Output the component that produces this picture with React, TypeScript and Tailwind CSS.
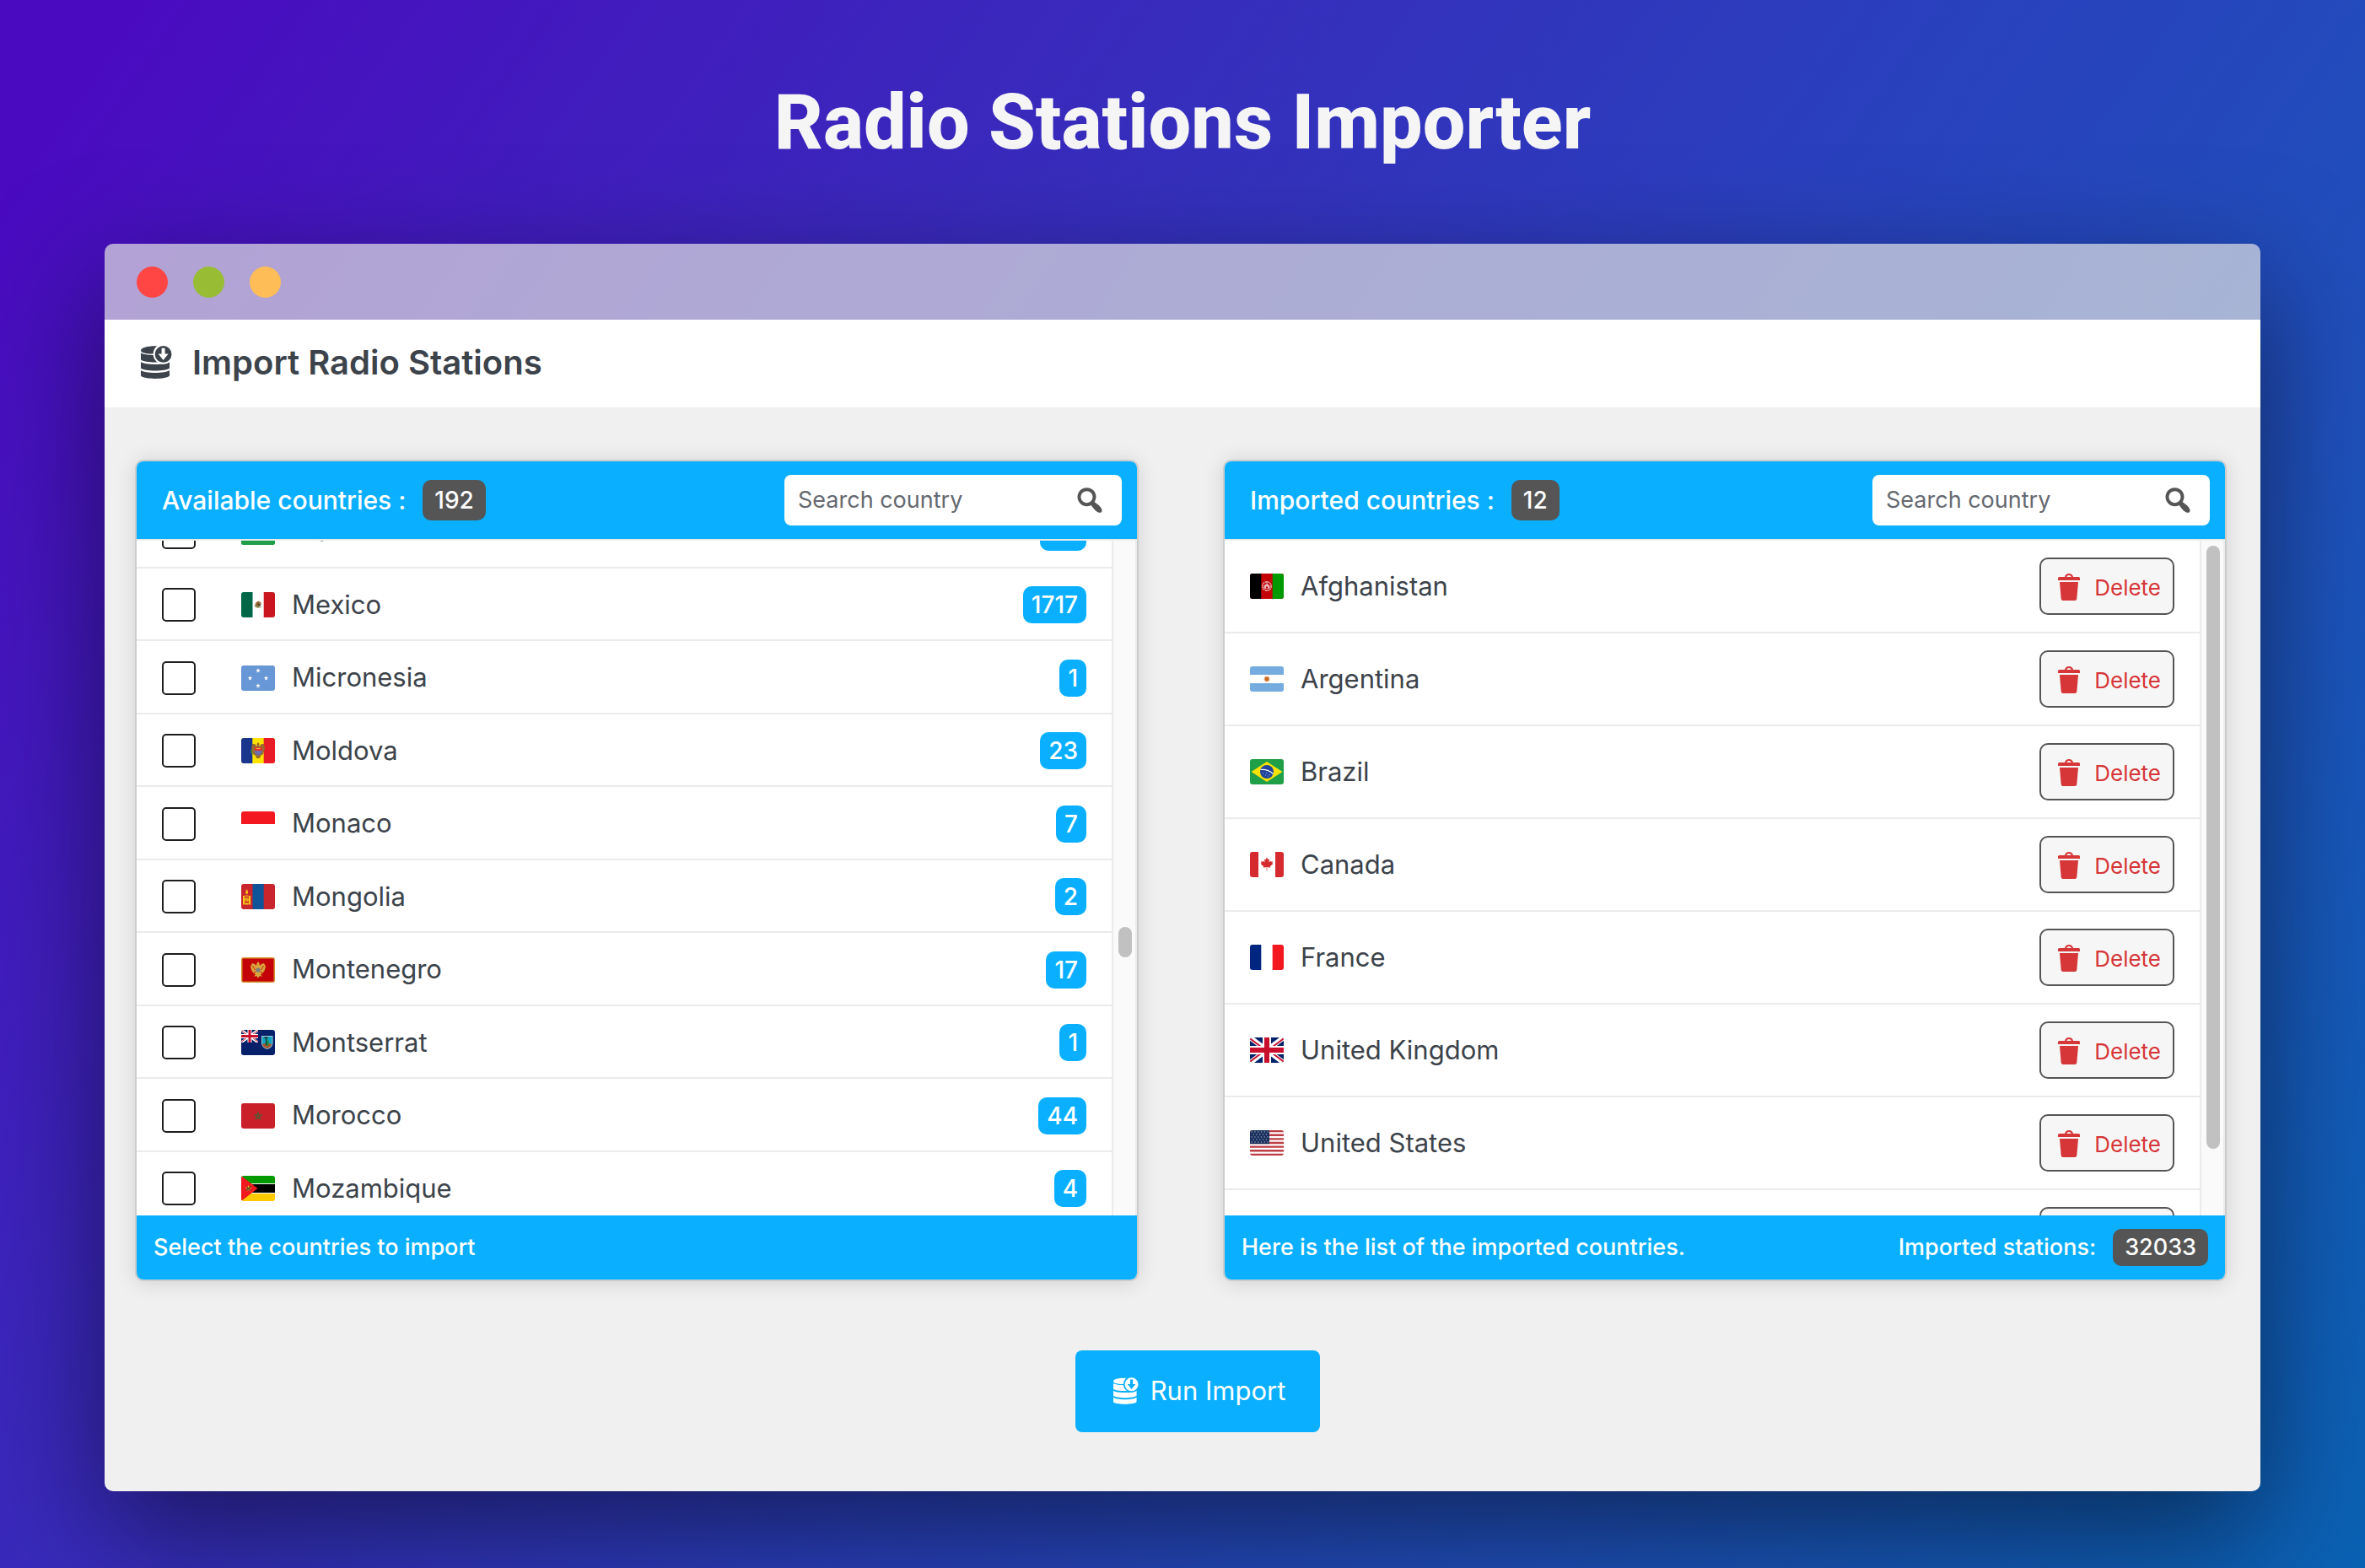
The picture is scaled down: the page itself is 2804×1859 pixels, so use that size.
import { useState, type ReactNode } from "react";

/* ---------- icons ---------- */

function DatabaseImportIcon({ className }: { className: string }) {
  return (
    <svg viewBox="0 0 37 40" className={className} fill="currentColor" aria-hidden="true">
      <mask id="db-cut" maskUnits="userSpaceOnUse" x="0" y="0" width="37" height="40">
        <rect width="37" height="40" fill="#fff" />
        <circle cx="26.6" cy="9.8" r="12" fill="#000" />
      </mask>
      <g mask="url(#db-cut)">
        <path d="M0 5.4C0 2.4 7.600 0.300 17 0.300S34 2.400 34 5.400 26.400 9.600 17 9.600 0 8.400 0 5.400Z" />
        <path d="M0 8.300C4 12 30 12 34 8.300V16.500C30 20.500 4 20.500 0 16.500Z" />
        <path d="M0 19C4 23 30 23 34 19V26.500C30 30.500 4 30.500 0 26.500Z" />
        <path d="M0 29C4 33 30 33 34 29V35.500C31 40 3 40 0 35.500Z" />
      </g>
      <path
        fillRule="evenodd"
        d="M26.600 0a9.900 9.900 0 1 1 0 19.800a9.900 9.900 0 1 1 0-19.800ZM24.600 2.800V9.500H20.600L26.600 17L32.600 9.500H28.600V2.800Z"
      />
    </svg>
  );
}

function SearchIcon() {
  return (
    <svg viewBox="0 0 20 20" className="size-10 shrink-0 text-[#555]" fill="currentColor" aria-hidden="true">
      <path d="M12.140 4.180c1.870 1.870 2.110 4.750.720 6.890.120.100.220.210.360.310.200.160.470.360.810.590.340.240.560.390.660.470.420.310.730.570.940.780.320.320.600.650.840 1 .250.350.440.690.590 1.040.140.350.210.680.180 1-.020.320-.140.590-.360.810s-.490.340-.810.360c-.310.020-.650-.040-.990-.190-.350-.140-.700-.340-1.040-.590-.350-.240-.680-.520-1-.840-.210-.210-.470-.520-.770-.930-.100-.130-.250-.350-.470-.660-.220-.320-.400-.570-.560-.780-.160-.200-.290-.350-.440-.500-2.070 1.090-4.690.760-6.440-.980-2.140-2.150-2.140-5.640 0-7.780 2.150-2.150 5.630-2.150 7.780 0zM10.730 10.540c1.360-1.370 1.360-3.580 0-4.950-1.370-1.370-3.590-1.370-4.950 0-1.370 1.370-1.370 3.580 0 4.950 1.360 1.370 3.580 1.370 4.950 0z" />
    </svg>
  );
}

function TrashIcon() {
  return (
    <svg viewBox="0 0 26 32" className="h-8 w-[26px] shrink-0" fill="currentColor" aria-hidden="true">
      <path
        fillRule="evenodd"
        d="M8 4C8.500 1.500 10.500 0 13 0S17.500 1.500 18 4H24.500Q26 4 26 5.500V8H0V5.500Q0 4 1.500 4ZM10.200 4H15.800Q15 1.900 13 1.900T10.200 4Z"
      />
      <path d="M2 10H24L22.300 30Q22.100 32 20 32H6Q3.900 32 3.700 30Z" />
    </svg>
  );
}

/* ---------- flags ---------- */

function starPoints(cx: number, cy: number, r: number, tips = 5, inner = 0.4) {
  return Array.from({ length: tips * 2 }, (_, i) => {
    const radius = i % 2 === 0 ? r : r * inner;
    const angle = (Math.PI * i) / tips - Math.PI / 2;
    return `${(cx + radius * Math.cos(angle)).toFixed(2)},${(cy + radius * Math.sin(angle)).toFixed(2)}`;
  }).join(" ");
}

const unionJack = (
  <>
    <rect width="40" height="30" fill="#012169" />
    <path d="M0 0L40 30M40 0L0 30" stroke="#fff" strokeWidth="6" />
    <path d="M0 1.200L16 13.200M24 16.800L40 28.800M40 1.200L24 13.200M16 16.800L0 28.800" stroke="#c8102e" strokeWidth="2" />
    <path d="M20 0V30M0 15H40" stroke="#fff" strokeWidth="10" />
    <path d="M20 0V30M0 15H40" stroke="#c8102e" strokeWidth="6" />
  </>
);

const flagArt: Record<string, ReactNode> = {
  mu: (
    <>
      <rect width="40" height="30" fill="#009f4d" />
      <rect width="40" height="22" fill="#ffd900" />
      <rect width="40" height="15" fill="#151f6d" />
      <rect width="40" height="7" fill="#ee2737" />
      <rect y="22" width="40" height="8" fill="#1f9f48" />
    </>
  ),
  mx: (
    <>
      <rect width="40" height="30" fill="#fff" />
      <rect width="13.500" height="30" fill="#006847" />
      <rect x="26.700" width="13.300" height="30" fill="#c9161f" />
      <path d="M16.500 14.500Q18 10.500 21 10.800Q24 12 23.500 15L21 18Q18 18.500 16.500 17Z" fill="#9a6a3a" />
      <path d="M15.500 16Q18 19.500 24 17.500" fill="none" stroke="#8fa06a" />
      <path d="M19.500 14l3 2" stroke="#2d3a3c" strokeWidth="1.500" />
    </>
  ),
  fm: (
    <>
      <rect width="40" height="30" fill="#6797d6" />
      <polygon points={starPoints(20, 6, 3)} fill="#fff" />
      <polygon points={starPoints(20, 24, 3)} fill="#fff" />
      <polygon points={starPoints(10.5, 15, 3)} fill="#fff" />
      <polygon points={starPoints(29.5, 15, 3)} fill="#fff" />
    </>
  ),
  md: (
    <>
      <rect width="40" height="30" fill="#fee300" />
      <rect width="13.300" height="30" fill="#19358e" />
      <rect x="26.700" width="13.300" height="30" fill="#e91b26" />
      <path d="M20 5l1.500 2 -.5 3 3-3h3l1 6-2 6-3 2-1 3h-4l-1-3-3-2-2-6 1-6h3l3 3-.5-3Z" fill="#9c6b2e" />
      <rect x="16" y="11" width="8.500" height="4" fill="#e3312d" />
      <path d="M16 15h8.500v3L20 21l-4-3Z" fill="#6b6fae" />
      <path d="M18 12.500h4.500" stroke="#f3c53a" />
      <path d="M11.500 14l1.500 5" stroke="#3f8d3a" strokeWidth="1.500" />
    </>
  ),
  mc: (
    <>
      <rect width="40" height="30" fill="#fff" />
      <rect width="40" height="15" fill="#f31820" />
    </>
  ),
  mn: (
    <>
      <rect width="40" height="30" fill="#c9252d" />
      <rect x="13.500" width="13.200" height="30" fill="#0f5499" />
      <path d="M2 14h2.200v10.500H2ZM8.800 14H11v10.500H8.800ZM4.600 13.500h3.800v1.200H4.600ZM4.600 22.500h3.800v2H4.600Z" fill="#f5c816" />
      <circle cx="6.500" cy="18.500" r="2.300" fill="#f5c816" />
      <path d="M6.500 17q1.200.8 0 1.600t0 1.600" stroke="#c9252d" strokeWidth=".7" fill="none" />
      <path d="M6.500 6q2.200 3 1.400 5a1.500 1.500 0 0 1-2.800 0q.2-2 1.400-5Z" fill="#f5c816" />
    </>
  ),
  me: (
    <>
      <rect width="40" height="30" fill="#d8922c" />
      <rect x="1.500" y="1.500" width="37" height="27" fill="#c40308" />
      <path
        d="M20 5l1.500 2 .5 3L24 8l3-1 2 4-1.500 5L25 19l-2 1 2 3-3-1-2 2.500L18 22l-3 1 2-3-2-1-2.500-3L11 11l2-4 3 1 2 2 .5-3Z"
        fill="#d9a63e"
      />
      <circle cx="20" cy="15" r="2.600" fill="#7a7f80" />
      <path d="M13.500 10l3 5M26.500 10l-3 5M15 18l2.500-1M25 18l-2.500-1" stroke="#c40308" strokeWidth=".8" />
    </>
  ),
  ms: (
    <>
      <rect width="40" height="30" fill="#062169" />
      <svg width="20" height="15" viewBox="0 0 40 30">
        {unionJack}
      </svg>
      <path d="M24 7h13.500v9q-1 5.500-6.700 7Q25 21.500 24 16Z" fill="#a9c3cf" />
      <path d="M25 8h11.500v8q-1 4.500-5.700 6Q26 20.500 25 16Z" fill="#0fa3c4" />
      <path d="M25 17q5-2 11.300 0-1.500 4-5.500 5-4.800-1-5.800-5Z" fill="#a8552c" />
      <path d="M31 10l2 5-1 4h-2.500l1-5Z" fill="#1f8a3c" />
      <path d="M29.500 8v10M27 9.500h5" stroke="#1b2b2a" strokeWidth="1.200" />
    </>
  ),
  ma: (
    <>
      <rect width="40" height="30" fill="#c9202a" />
      <polygon points={starPoints(20, 15.3, 4)} fill="none" stroke="#4e5b32" strokeWidth="1.300" />
    </>
  ),
  mz: (
    <>
      <rect width="40" height="30" fill="#fff" />
      <rect width="40" height="9" fill="#009a00" />
      <rect y="10" width="40" height="10" fill="#000" />
      <rect y="21" width="40" height="9" fill="#ffca00" />
      <path d="M0 0L19.500 15L0 30Z" fill="#f31820" />
      <polygon points={starPoints(8.5, 15, 4.2)} fill="#ffca00" />
      <path d="M6 17.500l5.500-5M6.500 13.500l4.500 4" stroke="#3a3a3a" strokeWidth="1.100" />
    </>
  ),
  af: (
    <>
      <rect width="40" height="30" fill="#c40308" />
      <rect width="13.300" height="30" fill="#000" />
      <rect x="26.700" width="13.300" height="30" fill="#009a00" />
      <circle cx="20" cy="15" r="5.200" fill="none" stroke="#e8b7b7" strokeWidth="1.400" strokeDasharray="2 .7" />
      <path d="M17 17.500v-3q3-4 6 0v3ZM18 19.500h4M20 9v3" fill="#e8b7b7" stroke="#e8b7b7" strokeWidth=".8" />
      <path d="M19 17.500v-2h2v2" fill="#c40308" />
    </>
  ),
  ar: (
    <>
      <rect width="40" height="30" fill="#74acdf" />
      <rect y="10" width="40" height="10" fill="#fff" />
      <polygon points={starPoints(20, 15, 4.2, 12, 0.65)} fill="#e6a57c" />
      <circle cx="20" cy="15" r="2.300" fill="#c8691c" />
    </>
  ),
  br: (
    <>
      <rect width="40" height="30" fill="#1f9f48" />
      <path d="M20 3L38.500 15L20 27L1.500 15Z" fill="#f8e105" />
      <circle cx="20" cy="15" r="8" fill="#20449b" />
      <path d="M12.500 12.500Q21 11.500 27.500 17.500" stroke="#fff" strokeWidth="1.200" fill="none" />
      <path d="M15 17h1M18 19h1M21 20h1M23 18.500h1M19 16.500h1" stroke="#b8c5e6" strokeWidth=".9" />
    </>
  ),
  ca: (
    <>
      <rect width="40" height="30" fill="#fff" />
      <path d="M0 0H10V30H0ZM30 0H40V30H30Z" fill="#d52b2e" />
      <path
        d="M20 6.500l1.500 2.800 1.600-.8-.7 4 2-2 .5 1.200 2.200-.4-.7 2.200 1 .6-3.600 3.200.4 1.400-3.900-.6V22.500h-.6V18.100l-3.900.6.4-1.400-3.600-3.200 1-.6-.7-2.200 2.200.4.500-1.200 2 2-.7-4 1.600.8Z"
        fill="#d52b2e"
      />
    </>
  ),
  fr: (
    <>
      <rect width="40" height="30" fill="#fff" />
      <rect width="13.300" height="30" fill="#00267f" />
      <rect x="26.700" width="13.300" height="30" fill="#f31820" />
    </>
  ),
  gb: unionJack,
  us: (
    <>
      <rect width="40" height="30" fill="#fff" />
      <path
        d="M0 1.150H40M0 5.770H40M0 10.380H40M0 15H40M0 19.620H40M0 24.230H40M0 28.850H40"
        stroke="#bd3d44"
        strokeWidth="2.310"
      />
      <rect width="23" height="16.150" fill="#192f5d" />
      {[2, 5, 8, 11, 14].map((y, row) => (
        <path
          key={y}
          d={row % 2 === 0 ? `M1.500 ${y}H22` : `M3.500 ${y}H22`}
          stroke="#c5ccda"
          strokeWidth="1.200"
          strokeDasharray="1.200 2.600"
        />
      ))}
    </>
  ),
};

function Flag({ code }: { code: string }) {
  return (
    <svg viewBox="0 0 40 30" className="h-[30px] w-10 shrink-0 rounded-[3px]" aria-hidden="true">
      {flagArt[code]}
    </svg>
  );
}

/* ---------- data ---------- */

const available = [
  { code: "mu", name: "Mauritius", stations: 22 },
  { code: "mx", name: "Mexico", stations: 1717 },
  { code: "fm", name: "Micronesia", stations: 1 },
  { code: "md", name: "Moldova", stations: 23 },
  { code: "mc", name: "Monaco", stations: 7 },
  { code: "mn", name: "Mongolia", stations: 2 },
  { code: "me", name: "Montenegro", stations: 17 },
  { code: "ms", name: "Montserrat", stations: 1 },
  { code: "ma", name: "Morocco", stations: 44 },
  { code: "mz", name: "Mozambique", stations: 4 },
];

const imported = [
  { code: "af", name: "Afghanistan" },
  { code: "ar", name: "Argentina" },
  { code: "br", name: "Brazil" },
  { code: "ca", name: "Canada" },
  { code: "fr", name: "France" },
  { code: "gb", name: "United Kingdom" },
  { code: "us", name: "United States" },
  { code: "", name: "" },
];

/* ---------- panels ---------- */

function SearchBox({ id, label }: { id: string; label: string }) {
  const [query, setQuery] = useState("");
  return (
    <label htmlFor={id} className="flex h-[60px] w-[400px] items-center rounded-lg bg-white pr-[18px] pl-4">
      <input
        id={id}
        type="text"
        aria-label={label}
        placeholder="Search country"
        value={query}
        onChange={(event) => setQuery(event.target.value)}
        className="min-w-0 flex-1 bg-transparent text-[27px] text-[#3c434a] outline-none placeholder:text-[#646970]"
      />
      <SearchIcon />
    </label>
  );
}

type PanelProps = {
  id: string;
  title: string;
  count: number;
  thumb: string;
  footer: ReactNode;
  children: ReactNode;
};

function Panel({ id, title, count, thumb, footer, children }: PanelProps) {
  return (
    <section className="min-w-0 flex-1 overflow-hidden rounded-[10px] border-2 border-[#ccc] bg-white shadow-[0_2px_24px_rgba(0,0,0,0.13)]">
      <div className="flex h-[92px] items-center justify-between bg-[#0ab0ff] pr-[18px] pl-[30px] text-white">
        <h3 className="flex items-center gap-5 text-[30px] font-medium">
          {title}
          <span className="flex h-12 items-center rounded-[10px] bg-[#555] px-[14px] text-[28px]">{count}</span>
        </h3>
        <SearchBox id={id} label={title + " search"} />
      </div>
      <div className="flex h-[802px] border-t-2 border-[#ebebeb]">
        <ul className="min-w-0 flex-1 overflow-hidden">{children}</ul>
        <div className="w-[30px] border-x-2 border-[#ebebeb] bg-[#fafafa] px-[6px] pt-[6px]">
          <div className={thumb} />
        </div>
      </div>
      <div className="flex h-[76px] items-center justify-between bg-[#0ab0ff] px-5 text-[27px] font-medium text-white">
        {footer}
      </div>
    </section>
  );
}

export default function App() {
  return (
    <div className="flex min-h-screen flex-col bg-[linear-gradient(125deg,#4a0bc0_4%,#3a28bc_30%,#2a3fbd_55%,#1f50bb_76%,#0a62b4_100%)] px-[124px] pb-[91px] font-['Inter','Liberation_Sans',sans-serif] text-[#3c434a]">
      <h1 className="flex h-[289px] items-center justify-center pt-[2px] font-['Roboto',sans-serif] text-[90px] leading-none font-extrabold text-[#f5f5f5]">
        Radio Stations Importer
      </h1>

      <main className="flex flex-1 flex-col overflow-hidden rounded-[10px] shadow-[0_50px_140px_rgba(0,0,0,0.5)]">
        <div className="flex h-[90px] items-center gap-[30px] bg-[#dfdfdf]/71 pl-[38px]">
          <span className="size-[37px] rounded-full bg-[#ff4644]" />
          <span className="size-[37px] rounded-full bg-[#98bc34]" />
          <span className="size-[37px] rounded-full bg-[#ffbd58]" />
        </div>

        <header className="flex h-[104px] items-center gap-6 bg-white pb-[2px] pl-[43px]">
          <DatabaseImportIcon className="h-10 w-[37px] text-[#3c434a]" />
          <h2 className="text-[40px] font-semibold">Import Radio Stations</h2>
        </header>

        <div className="flex flex-1 flex-col bg-[#f0f0f0] pt-[62px] pl-9">
          <div className="flex gap-[100px] pr-10">
            <Panel
              id="available-search"
              title="Available countries :"
              count={192}
              thumb="mt-[452px] h-9 w-4 rounded-full bg-[#c1c1c1]"
              footer={<p>Select the countries to import</p>}
            >
              {available.map(({ code, name, stations }) => (
                <li
                  key={code}
                  className="flex items-center border-b-2 border-[#ebebeb] px-[30px] pt-[2px] first:-mt-[54px] odd:h-[87px] even:h-[86px]"
                >
                  <input
                    id={"pick-" + code}
                    type="checkbox"
                    className="size-10 shrink-0 appearance-none rounded-[5px] border-2 border-[#1e1e1e] bg-white checked:bg-[#0ab0ff]"
                  />
                  <label htmlFor={"pick-" + code} className="flex flex-1 items-center gap-5 pl-[54px] text-[31px]">
                    <Flag code={code} />
                    {name}
                  </label>
                  <span className="flex h-11 items-center rounded-[10px] bg-[#0ab0ff] px-[10px] text-[28px] font-medium text-white">
                    {stations}
                  </span>
                </li>
              ))}
            </Panel>

            <Panel
              id="imported-search"
              title="Imported countries :"
              count={12}
              thumb="h-[715px] w-4 rounded-full bg-[#c1c1c1]"
              footer={
                <>
                  <p>Here is the list of the imported countries.</p>
                  <p className="flex items-center gap-5">
                    Imported stations:
                    <span className="flex h-11 items-center rounded-[10px] bg-[#555] px-[14px]">32033</span>
                  </p>
                </>
              }
            >
              {imported.map(({ code, name }) => (
                <li key={code} className="flex h-[110px] items-center justify-between border-b-2 border-[#ebebeb] px-[30px]">
                  <span className="flex items-center gap-5 text-[31px]">
                    <Flag code={code} />
                    {name}
                  </span>
                  <button
                    type="button"
                    className="flex h-[68px] w-40 items-center justify-between rounded-[10px] border-2 border-[#555] bg-[#f6f6f6] pt-[2px] pr-[14px] pl-5 text-[26px] text-[#d63638]"
                  >
                    <TrashIcon />
                    Delete
                  </button>
                </li>
              ))}
            </Panel>
          </div>

          <div className="mt-[82px] flex justify-center">
            <button
              type="button"
              className="flex h-[97px] w-[290px] items-center justify-center gap-[14px] rounded-lg bg-[#0ab0ff] pl-1 text-[31px] text-white"
            >
              <DatabaseImportIcon className="h-[33px] w-[30px]" />
              Run Import
            </button>
          </div>
        </div>
      </main>
    </div>
  );
}
